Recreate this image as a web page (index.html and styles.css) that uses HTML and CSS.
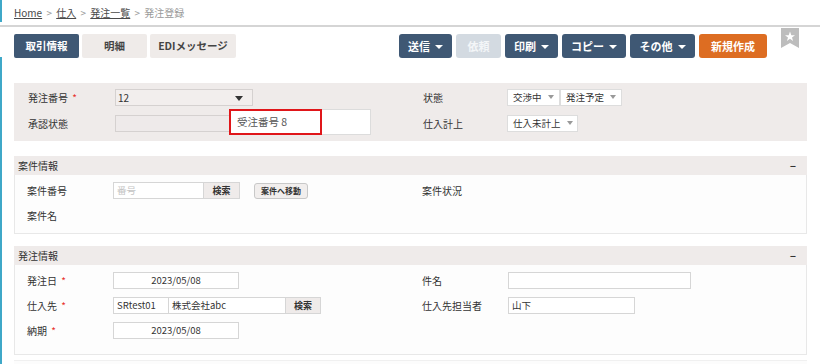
FILE: index.html
```html
<!DOCTYPE html>
<html>

<head>
    <meta charset="utf-8">
    <title>発注登録</title>
    <link rel="stylesheet" href="styles.css">
</head>

<body>
    <!-- BREADCRUMB -->
    <div class="crumbs">
        <a href="#">Home</a> <span class="sep">&gt;</span> <a href="#">仕入</a> <span class="sep">&gt;</span>
        <a href="#">発注一覧</a> <span class="sep">&gt;</span> <span class="current">発注登録</span>
    </div>

    <div class="page">
        <!-- TOOLBAR -->
        <div class="toolbar">
            <div class="tabs">
                <div class="tab active">取引情報</div>
                <div class="tab">明細</div>
                <div class="tab wide">EDIメッセージ</div>
            </div>
            <div class="actions">
                <div class="btn dark w53">送信<i class="caret"></i></div>
                <div class="btn disabled w45">依頼</div>
                <div class="btn dark w53">印刷<i class="caret"></i></div>
                <div class="btn dark w64">コピー<i class="caret"></i></div>
                <div class="btn dark w65">その他<i class="caret"></i></div>
                <div class="btn orange w68">新規作成</div>
                <svg class="bookmark" width="18" height="20" viewBox="0 0 18 20">
                    <path d="M0 0H18V20L9 15L0 20Z" fill="#bdbdbd" />
                    <path d="M9 3.5L10.3 7.2H14L11 9.4L12.1 13L9 10.8L5.9 13L7 9.4L4 7.2H7.7Z" fill="#fff" />
                </svg>
            </div>
        </div>

        <!-- HEAD PANEL -->
        <div class="head-panel">
            <div class="field">
                <label class="lbl-l">発注番号 <em>*</em></label>
                <div class="select-box">12<i class="dark-caret"></i></div>
            </div>
            <div class="field">
                <label class="lbl-r">状態</label>
                <div class="pick w53p">交渉中<i class="gray-caret"></i></div>
                <div class="pick w62p">発注予定<i class="gray-caret"></i></div>
            </div>
            <div class="field">
                <label class="lbl-l">承認状態</label>
                <div class="readonly-box"></div>
                <!-- dropdown list -->
                <div class="popup">
                    <div class="popup-item">受注番号 8</div>
                </div>
            </div>
            <div class="field">
                <label class="lbl-r">仕入計上</label>
                <div class="pick w71p">仕入未計上<i class="gray-caret"></i></div>
            </div>
        </div>

        <!-- 案件情報 -->
        <section class="box">
            <div class="box-head"><span>案件情報</span><span class="fold">−</span></div>
            <div class="box-body">
                <div class="field">
                    <label class="lbl-s">案件番号</label>
                    <div class="combo w127">
                        <span class="in placeholder">番号</span><span class="cbtn">検索</span>
                    </div>
                    <div class="small-btn">案件へ移動</div>
                </div>
                <div class="field">
                    <label class="lbl-sr">案件状況</label>
                </div>
                <div class="field">
                    <label class="lbl-s">案件名</label>
                </div>
                <div class="field"></div>
            </div>
        </section>

        <!-- 発注情報 -->
        <section class="box second">
            <div class="box-head"><span>発注情報</span><span class="fold">−</span></div>
            <div class="box-body tall">
                <div class="field">
                    <label class="lbl-s">発注日 <em>*</em></label>
                    <div class="input w126 center">2023/05/08</div>
                </div>
                <div class="field">
                    <label class="lbl-sr">件名</label>
                    <div class="input w183"></div>
                </div>
                <div class="field">
                    <label class="lbl-s">仕入先 <em>*</em></label>
                    <div class="combo">
                        <span class="in w54">SRtest01</span><span class="in w119 bl">株式会社abc</span><span class="cbtn w35">検索</span>
                    </div>
                </div>
                <div class="field">
                    <label class="lbl-sr">仕入先担当者</label>
                    <div class="input w127">山下</div>
                </div>
                <div class="field">
                    <label class="lbl-s">納期 <em>*</em></label>
                    <div class="input w126 center">2023/05/08</div>
                </div>
                <div class="field"></div>
            </div>
        </section>

        <section class="box third"></section>
    </div>
</body>

</html>
```

FILE: styles.css
```css
body {
    margin: 0;
    background: linear-gradient(#3fa8c8, #3fa8c8) 0 0 / 2px 22px no-repeat,
        linear-gradient(#3fa8c8, #3fa8c8) 0 57px / 2px 100% no-repeat,
        #fff;
    color: #333;
    font-family: "Noto Sans CJK JP", "Noto Sans", sans-serif;
    font-size: 10px;
    overflow: hidden;
    height: 364px;
}

/* BREADCRUMB */
.crumbs {
    height: 25px;
    line-height: 25px;
    padding-left: 14px;
    border-bottom: 2px solid #d5d5d5;
    font-size: 10px;
    color: #999;
}

.crumbs a {
    color: #4a4a4a;
}

.crumbs .sep {
    margin: 0 2px;
}

.page {
    padding: 0 13px 0 14px;
}

/* TOOLBAR */
.toolbar {
    display: flex;
    margin-top: 7px;
    height: 25px;
}

.tabs {
    display: flex;
    gap: 3px;
}

.tab {
    width: 65px;
    height: 24px;
    line-height: 24px;
    text-align: center;
    background-color: #efebe9;
    color: #444;
    font-weight: bold;
    font-size: 10.5px;
    border-radius: 2px;
}

.tab.active {
    background-color: #3f5874;
    color: #fff;
}

.tab.wide {
    width: 86px;
}

.actions {
    margin-left: auto;
    display: flex;
    gap: 4px;
    margin-right: 8px;
}

.btn {
    height: 24px;
    line-height: 24px;
    text-align: center;
    border-radius: 3px;
    color: #fff;
    font-weight: bold;
    font-size: 11px;
}

.btn.dark {
    background-color: #3f5874;
}

.btn.disabled {
    background-color: #d3dae1;
    color: #f4f6f8;
}

.btn.orange {
    background-color: #dd6d22;
}

.w53 { width: 53px; }
.w45 { width: 45px; }
.w64 { width: 64px; }
.w65 { width: 65px; }
.w68 { width: 68px; }

.caret {
    display: inline-block;
    margin-left: 5px;
    vertical-align: 2px;
    border-left: 4px solid transparent;
    border-right: 4px solid transparent;
    border-top: 4px solid #fff;
}

.bookmark {
    margin-left: 10px;
    margin-top: -6px;
}

/* HEAD PANEL */
.head-panel {
    position: relative;
    margin-top: 24px;
    background-color: #efebea;
    padding: 6px 14px 9px;
    display: grid;
    grid-template-columns: 395px 1fr;
    row-gap: 9px;
}

.field {
    display: flex;
    align-items: center;
    height: 17px;
}

label {
    flex-shrink: 0;
}

label em {
    color: #e8302a;
    font-style: normal;
    margin-left: 2px;
}

.lbl-l { width: 87px; }
.lbl-r { width: 84px; }
.lbl-s { width: 86px; }
.lbl-sr { width: 86px; }

.select-box {
    position: relative;
    width: 138px;
    height: 17px;
    line-height: 15px;
    box-sizing: border-box;
    border: 1px solid #d5d1d0;
    background-color: #f2eeed;
    padding-left: 2px;
}

.dark-caret {
    position: absolute;
    right: 9px;
    top: 6px;
    border-left: 4px solid transparent;
    border-right: 4px solid transparent;
    border-top: 5px solid #333;
}

.readonly-box {
    width: 138px;
    height: 17px;
    box-sizing: border-box;
    border: 1px solid #d5d1d0;
    background-color: #eeeaea;
}

.popup {
    position: absolute;
    left: 215px;
    top: 26px;
    width: 142px;
    height: 26px;
    box-sizing: border-box;
    background-color: #fff;
    border: 1px solid #dcdcdc;
}

.popup-item {
    width: 93px;
    height: 26px;
    margin: -1px 0 0 -1px;
    box-sizing: border-box;
    border: 2px solid #e0161a;
    line-height: 22px;
    padding-left: 6px;
    font-size: 10.5px;
    color: #555;
}

.pick {
    height: 17px;
    line-height: 15px;
    box-sizing: border-box;
    border: 1px solid #ddd;
    background-color: #fff;
    padding-left: 5px;
    font-size: 9.5px;
}

.w53p { width: 53px; }
.w62p { width: 62px; }
.w71p { width: 71px; }

.gray-caret {
    display: inline-block;
    margin-left: 6px;
    vertical-align: 2px;
    border-left: 3px solid transparent;
    border-right: 3px solid transparent;
    border-top: 4px solid #999;
}

/* SECTIONS */
.box {
    margin-top: 15px;
}

.box.second {
    margin-top: 12px;
}

.box.third {
    margin-top: 5px;
    height: 10px;
    border-top: 1px solid #f0f0f0;
    background-color: #fcfcfc;
}

.box-head {
    display: flex;
    justify-content: space-between;
    height: 19px;
    line-height: 19px;
    padding: 0 11px 0 4px;
    background-color: #efebea;
}

.fold {
    font-weight: bold;
}

.box-body {
    display: grid;
    grid-template-columns: 395px 1fr;
    row-gap: 8px;
    padding: 7px 12px 9px;
    border: 1px solid #e8e8e8;
    border-top: none;
    background-color: #fdfdfd;
}

.box-body.tall {
    padding-bottom: 15px;
}

.input {
    height: 17px;
    line-height: 15px;
    box-sizing: border-box;
    border: 1px solid #d6d6d6;
    background-color: #fff;
    padding-left: 3px;
    font-size: 9.5px;
}

.input.center {
    text-align: center;
    padding-left: 0;
}

.w126 { width: 126px; }
.w127 { width: 127px; }
.w183 { width: 183px; }

.combo {
    display: flex;
    height: 17px;
    box-sizing: border-box;
    border: 1px solid #d6d6d6;
    background-color: #fff;
    font-size: 9.5px;
}

.combo .in {
    flex-grow: 1;
    line-height: 15px;
    padding-left: 3px;
}

.combo .in.w54 {
    flex: 0 0 54px;
    box-sizing: border-box;
}

.combo .in.w119 {
    flex: 0 0 117px;
    box-sizing: border-box;
}

.combo .bl {
    border-left: 1px solid #d6d6d6;
}

.placeholder {
    color: #c4c4c4;
}

.cbtn {
    width: 35px;
    line-height: 15px;
    text-align: center;
    background-color: #efebea;
    font-weight: bold;
    font-size: 9px;
    border-left: 1px solid #d6d6d6;
}

.cbtn.w35 {
    width: 34px;
}

.small-btn {
    margin-left: 14px;
    width: 54px;
    height: 16px;
    line-height: 14px;
    box-sizing: border-box;
    text-align: center;
    border: 1px solid #c8c8c8;
    border-radius: 3px;
    background-color: #f1eeed;
    font-weight: bold;
    font-size: 8px;
}
```
